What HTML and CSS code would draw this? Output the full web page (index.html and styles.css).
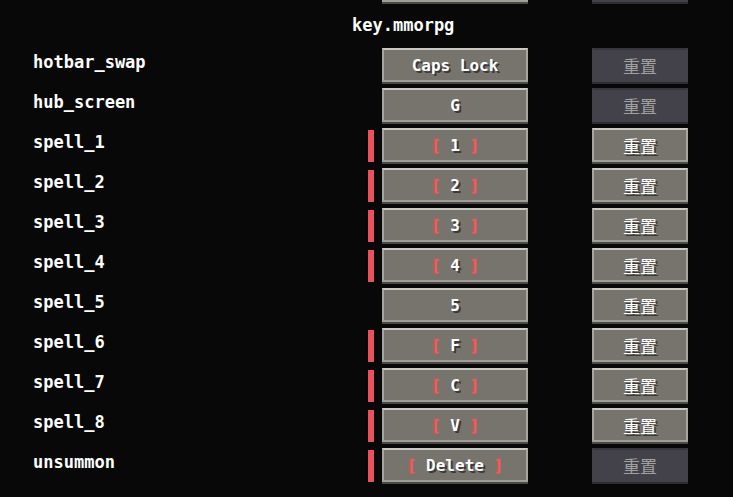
FILE: index.html
```html
<!DOCTYPE html>
<html>
<head>
    <title>Controls</title>
    <meta name="viewport" content="width=device-width, initial-scale=1.0">
    <link rel="stylesheet" href="styles.css">
</head>
<body>
    <div class="list">
        <!-- row scrolled mostly out of view -->
        <div class="row">
            <span class="label"></span>
            <span class="mark off"></span>
            <button class="key"></button>
            <button class="reset" disabled></button>
        </div>

        <div class="category">key.mmorpg</div>

        <div class="row">
            <span class="label">hotbar_swap</span>
            <span class="mark off"></span>
            <button class="key">Caps Lock</button>
            <button class="reset" disabled>重置</button>
        </div>
        <div class="row">
            <span class="label">hub_screen</span>
            <span class="mark off"></span>
            <button class="key">G</button>
            <button class="reset" disabled>重置</button>
        </div>
        <div class="row">
            <span class="label">spell_1</span>
            <span class="mark"></span>
            <button class="key"><span class="br">[</span> 1 <span class="br">]</span></button>
            <button class="reset">重置</button>
        </div>
        <div class="row">
            <span class="label">spell_2</span>
            <span class="mark"></span>
            <button class="key"><span class="br">[</span> 2 <span class="br">]</span></button>
            <button class="reset">重置</button>
        </div>
        <div class="row">
            <span class="label">spell_3</span>
            <span class="mark"></span>
            <button class="key"><span class="br">[</span> 3 <span class="br">]</span></button>
            <button class="reset">重置</button>
        </div>
        <div class="row">
            <span class="label">spell_4</span>
            <span class="mark"></span>
            <button class="key"><span class="br">[</span> 4 <span class="br">]</span></button>
            <button class="reset">重置</button>
        </div>
        <div class="row">
            <span class="label">spell_5</span>
            <span class="mark off"></span>
            <button class="key">5</button>
            <button class="reset">重置</button>
        </div>
        <div class="row">
            <span class="label">spell_6</span>
            <span class="mark"></span>
            <button class="key"><span class="br">[</span> F <span class="br">]</span></button>
            <button class="reset">重置</button>
        </div>
        <div class="row">
            <span class="label">spell_7</span>
            <span class="mark"></span>
            <button class="key"><span class="br">[</span> C <span class="br">]</span></button>
            <button class="reset">重置</button>
        </div>
        <div class="row">
            <span class="label">spell_8</span>
            <span class="mark"></span>
            <button class="key"><span class="br">[</span> V <span class="br">]</span></button>
            <button class="reset">重置</button>
        </div>
        <div class="row">
            <span class="label">unsummon</span>
            <span class="mark"></span>
            <button class="key"><span class="br">[</span> Delete <span class="br">]</span></button>
            <button class="reset" disabled>重置</button>
        </div>
    </div>
</body>
</html>
```

FILE: styles.css
```css
* {
    margin: 0;
    padding: 0;
    box-sizing: border-box;
}

body {
    background: #080808;
    color: #fff;
    font-family: "DejaVu Sans Mono", monospace;
    height: 497px;
    overflow: hidden;
}

.list {
    margin-top: -32px;
}

.category {
    height: 40px;
    padding: 7px 0 0 352px;
    font-size: 17px;
    font-weight: bold;
    line-height: 20px;
}

.row {
    display: grid;
    grid-template-columns: 368px 6px 8px 146px 64px 96px;
    height: 36px;
    margin-bottom: 4px;
}

.label {
    grid-column: 1;
    padding: 4px 0 0 33px;
    font-size: 17px;
    font-weight: bold;
    line-height: 20px;
}

.mark {
    grid-column: 2;
    margin: 2px 0 2px;
    background: #e8525a;
}

.mark.off {
    background: none;
}

.key, .reset {
    font-family: "DejaVu Sans Mono", "Noto Sans CJK SC", monospace;
    font-size: 16px;
    font-weight: bold;
    color: #fff;
    text-shadow: 2px 2px 0 #3a3a3a;
    background: #77746d;
    border: 2px solid #a7a59f;
    border-top-color: #c9c8c3;
    border-bottom-color: #a09e98;
    box-shadow: 0 2px 0 #4a4946;
    height: 34px;
    cursor: pointer;
}

.key {
    grid-column: 4;
}

.reset {
    grid-column: 6;
    font-family: "Noto Sans CJK SC", sans-serif;
    font-weight: normal;
    font-size: 17px;
}

.reset:disabled {
    background: #43424a;
    border-color: #43424a;
    border-top-color: #37363c;
    box-shadow: 0 2px 0 #2e2d33;
    color: #a0a0a0;
    text-shadow: none;
}

.br {
    color: #ff5555;
    text-shadow: 0 0 3px rgba(255, 85, 85, 0.5);
}
```
